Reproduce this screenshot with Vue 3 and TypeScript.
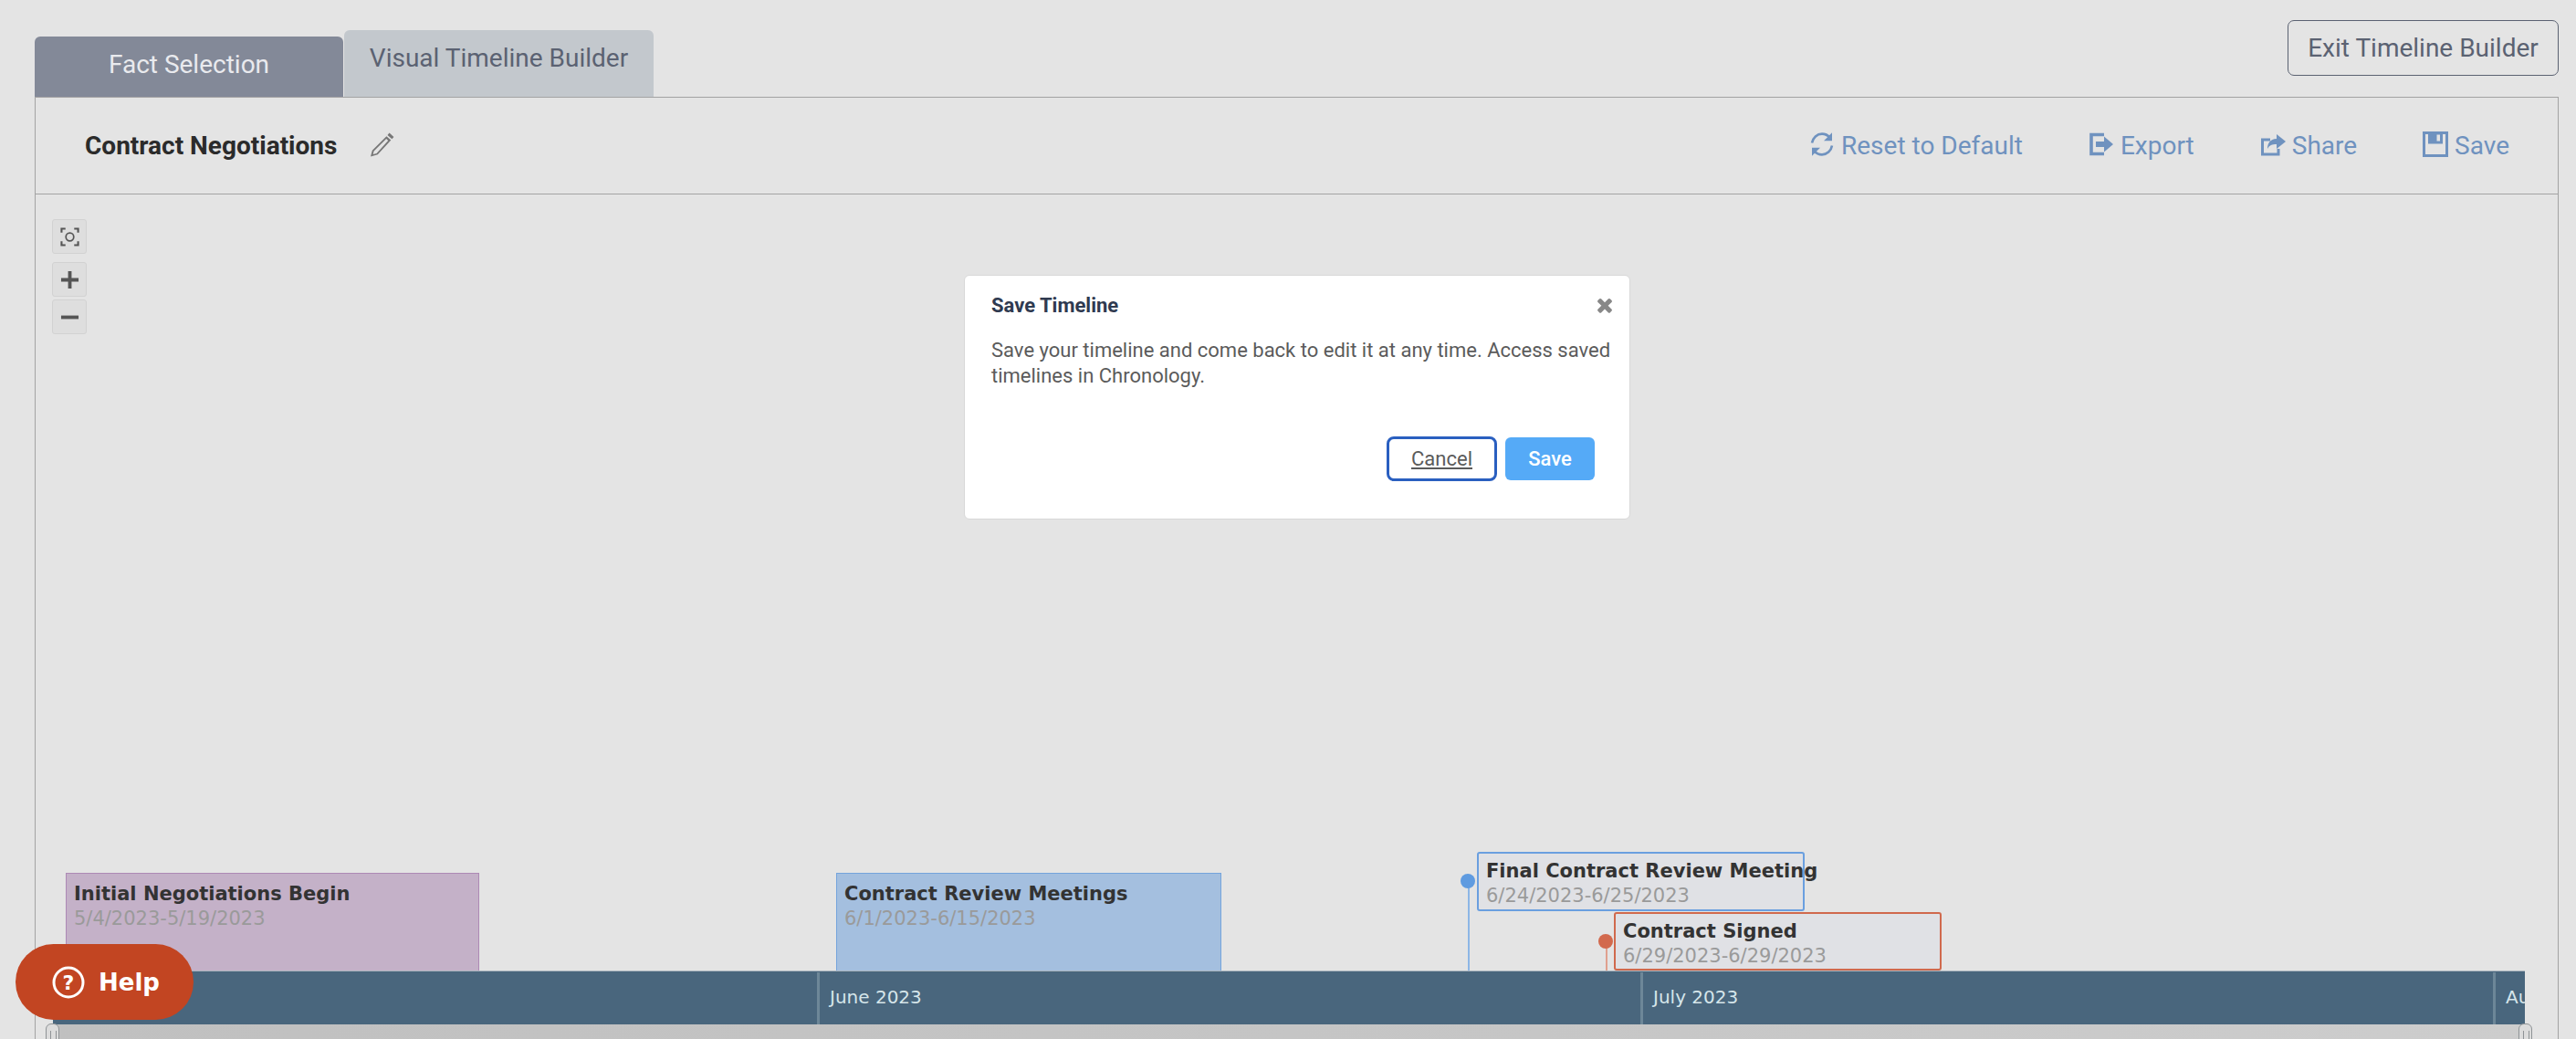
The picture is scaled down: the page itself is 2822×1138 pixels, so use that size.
<script setup lang="ts">
interface Span {
  title: string
  dates: string
  left: number
  width: number
  kind: string
}

const spans: Span[] = [
  { title: 'Initial Negotiations Begin', dates: '5/4/2023-5/19/2023', left: 71, width: 453, kind: 'purple' },
  { title: 'Contract Review Meetings', dates: '6/1/2023-6/15/2023', left: 915, width: 422, kind: 'blue' },
]

const months = [
  { label: 'June 2023', left: 837 },
  { label: 'July 2023', left: 1739 },
  { label: 'August 2023', left: 2673 },
]
</script>

<template>
  <div class="page">
    <div class="top-row">
      <div class="tabs">
        <div class="tab tab-fact">Fact Selection</div>
        <div class="tab tab-visual">Visual Timeline Builder</div>
      </div>
      <button class="exit-btn">Exit Timeline Builder</button>
    </div>

    <div class="panel">
      <div class="panel-head">
        <div class="name">
          <span>Contract Negotiations</span>
          <svg class="pencil" viewBox="0 0 28 28">
            <path d="M21.5 1.6l4.9 4.4-2 2.3-4.9-4.4zM18.4 5.2l4.9 4.4L8.8 25.2 1 27.4l1.8-6.7zM4.6 21.4l-1 3.6 4-1.1L20.2 9.9l-2-1.8z" fill="#777" fill-rule="evenodd" />
          </svg>
        </div>
        <div class="actions">
          <a class="action action-reset">
            <svg viewBox="0 0 28 28" class="ico">
              <path d="M3 12.5C4 6.8 8.6 2.6 14 2.6c3.4 0 6.4 1.5 8.4 4" fill="none" stroke="#6f92bf" stroke-width="2.6" />
              <path d="M25 1.2v9h-9z" fill="#6f92bf" />
              <path d="M25 15.5c-1 5.7-5.600 9.900-11 9.900-3.400 0-6.400-1.500-8.400-4" fill="none" stroke="#6f92bf" stroke-width="2.600" />
              <path d="M3 26.800v-9h9z" fill="#6f92bf" />
            </svg>
            Reset to Default
          </a>
          <a class="action action-export">
            <svg viewBox="0 0 28 28" class="ico">
              <path d="M17 3.500H3v21h14" fill="none" stroke="#6f92bf" stroke-width="3.600" />
              <path d="M8 11h9V5.500l10 8.500-10 8.500V17H8z" fill="#6f92bf" />
            </svg>
            Export
          </a>
          <a class="action action-share">
            <svg viewBox="0 0 28 28" class="ico">
              <path d="M11 9H2.500v16H20v-6" fill="none" stroke="#6f92bf" stroke-width="3" />
              <path d="M18 3l10 8-10 8v-5c-5 0-8 1-10 5 0-6 3-11 10-11z" fill="#6f92bf" />
            </svg>
            Share
          </a>
          <a class="action action-save">
            <svg viewBox="0 0 28 28" class="ico">
              <path d="M1.500 1.500h25v25h-25z" fill="none" stroke="#6f92bf" stroke-width="3" />
              <path d="M6 1.500h16v12H6z" fill="#6f92bf" />
              <path d="M15.500 3.500h3.500v7h-3.500z" fill="#e4e4e4" />
            </svg>
            Save
          </a>
        </div>
      </div>

      <div class="canvas">
        <div class="zoom-tools">
          <button class="zoom-btn">
            <svg viewBox="0 0 22 22" class="zoom-ico">
              <path d="M1.500 6V1.500H6M16 1.500h4.500V6M20.500 16v4.500H16M6 20.500H1.500V16" fill="none" stroke="#555" stroke-width="2.200" />
              <circle cx="11" cy="11" r="4.500" fill="none" stroke="#555" stroke-width="1.800" />
            </svg>
          </button>
          <div class="zoom-pair">
            <button class="zoom-btn">
              <svg viewBox="0 0 22 22" class="zoom-ico">
                <path d="M1 11h20M11 1v20" stroke="#555" stroke-width="4" />
              </svg>
            </button>
            <button class="zoom-btn">
              <svg viewBox="0 0 22 22" class="zoom-ico">
                <path d="M1 11h20" stroke="#555" stroke-width="4" />
              </svg>
            </button>
          </div>
        </div>

        <div v-for="s in spans" :key="s.title" class="span" :class="s.kind" :style="{ left: s.left - 38 + 'px', width: s.width + 'px' }">
          <div class="item-title">{{ s.title }}</div>
          <div class="item-dates">{{ s.dates }}</div>
        </div>

        <div class="stem stem-blue"></div>
        <div class="dot dot-blue"></div>
        <div class="point point-blue">
          <div class="item-title">Final Contract Review Meeting</div>
          <div class="item-dates">6/24/2023-6/25/2023</div>
        </div>

        <div class="stem stem-red"></div>
        <div class="dot dot-red"></div>
        <div class="point point-red">
          <div class="item-title">Contract Signed</div>
          <div class="item-dates">6/29/2023-6/29/2023</div>
        </div>

        <div class="axis">
          <div v-for="m in months" :key="m.label" class="month" :style="{ left: m.left + 'px' }">{{ m.label }}</div>
        </div>
        <div class="scroller">
          <div class="handle handle-left"></div>
          <div class="handle handle-right"></div>
        </div>
      </div>
    </div>

    <div class="modal">
      <div class="modal-title">Save Timeline</div>
      <svg class="modal-close" viewBox="0 0 1792 1792">
        <path d="M1490 1322q0 40-28 68l-136 136q-28 28-68 28t-68-28l-294-294-294 294q-28 28-68 28t-68-28l-136-136q-28-28-28-68t28-68l294-294-294-294q-28-28-28-68t28-68l136-136q28-28 68-28t68 28l294 294 294-294q28-28 68-28t68 28l136 136q28 28 28 68t-28 68l-294 294 294 294q28 28 28 68z" fill="#888" />
      </svg>
      <p class="modal-text">Save your timeline and come back to edit it at any time. Access saved timelines in Chronology.</p>
      <div class="modal-foot">
        <button class="btn-cancel">Cancel</button>
        <button class="btn-save">Save</button>
      </div>
    </div>

    <button class="help">
      <svg class="help-ico" viewBox="0 0 36 36">
        <circle cx="18" cy="18" r="16" fill="none" stroke="#fff" stroke-width="3" />
        <text x="18" y="26" text-anchor="middle" class="help-q">?</text>
      </svg>
      Help
    </button>
  </div>
</template>

<style>
html,
body {
  margin: 0;
  background: #e4e4e4;
}
</style>

<style scoped>
.page {
  position: relative;
  width: 2822px;
  height: 1138px;
  overflow: hidden;
  background: #e4e4e4;
  font-family: Roboto, sans-serif;
  display: flex;
  flex-direction: column;
}

.top-row {
  height: 106px;
  padding: 0 19px 0 38px;
  display: flex;
  justify-content: space-between;
  box-sizing: border-box;
  flex: none;
}

.tabs {
  display: flex;
  align-items: flex-end;
  gap: 1px;
}

.tab {
  font-size: 28px;
  display: flex;
  justify-content: center;
  border-radius: 6px 6px 0 0;
  box-sizing: border-box;
}

.tab-fact {
  width: 338px;
  height: 66px;
  padding-top: 14px;
  background: #838998;
  color: #e9eaee;
}

.tab-visual {
  width: 339px;
  height: 73px;
  padding-top: 14px;
  background: #c3c8cd;
  color: #5b6272;
}

.exit-btn {
  margin-top: 22px;
  width: 297px;
  height: 61px;
  padding: 0;
  background: transparent;
  border: 1.500px solid #5b6272;
  border-radius: 7px;
  font-family: Roboto, sans-serif;
  font-size: 28px;
  color: #5b6272;
}

.panel {
  margin: 0 19px 0 38px;
  flex: 1;
  display: flex;
  flex-direction: column;
  border: 1.500px solid #a3a3a3;
  border-bottom: 0;
  box-sizing: border-box;
  min-height: 0;
}

.panel-head {
  height: 105px;
  flex: none;
  padding: 0 53px 0 54px;
  border-bottom: 1.500px solid #a3a3a3;
  display: flex;
  align-items: center;
  justify-content: space-between;
  box-sizing: content-box;
}

.name {
  display: flex;
  align-items: center;
  gap: 36px;
  font-size: 28px;
  font-weight: 700;
  color: #2b2b2b;
}

.pencil {
  width: 28px;
  height: 28px;
  margin-top: -4px;
}

.actions {
  display: flex;
  gap: 72px;
}

.action {
  display: flex;
  align-items: center;
  gap: 7px;
  font-size: 28px;
  color: #6f92bf;
}

.ico {
  width: 28px;
  height: 28px;
  margin-top: -4px;
}

.canvas {
  position: relative;
  flex: 1;
  min-height: 0;
}

.zoom-tools {
  position: absolute;
  left: 18px;
  top: 27px;
  display: flex;
  flex-direction: column;
  gap: 9px;
}

.zoom-pair {
  display: flex;
  flex-direction: column;
  gap: 3px;
}

.zoom-btn {
  width: 38px;
  height: 38px;
  padding: 0;
  background: #dedede;
  border: 1px solid #d2d2d2;
  border-radius: 3px;
  display: flex;
  align-items: center;
  justify-content: center;
}

.zoom-ico {
  width: 21px;
  height: 21px;
}

.span,
.point {
  position: absolute;
  box-sizing: border-box;
  font-family: "DejaVu Sans", sans-serif;
}

.span {
  top: 743px;
  height: 107px;
  padding: 9px 8px;
  border: 1.500px solid;
  border-bottom: 0;
}

.purple {
  background: #c4b1c8;
  border-color: #ad89b5;
}

.blue {
  background: #a4bfdf;
  border-color: #74a4dc;
}

.item-title {
  font-size: 21px;
  font-weight: 700;
  line-height: 27px;
  color: #333;
  white-space: nowrap;
}

.item-dates {
  font-size: 21px;
  line-height: 26px;
  color: #9a9a9a;
  white-space: nowrap;
}

.point {
  width: 359px;
  height: 65px;
  padding: 6px 8px;
  background: #e0e1e5;
  border: 2px solid;
  border-radius: 3px;
}

.point-blue {
  left: 1579px;
  top: 720px;
  border-color: #6a9fdf;
}

.point-red {
  left: 1729px;
  top: 786px;
  height: 64px;
  border-color: #d0694d;
}

.stem,
.dot {
  position: absolute;
}

.stem {
  width: 1.500px;
}

.stem-blue {
  left: 1569px;
  top: 752px;
  height: 98px;
  background: #8db6e6;
}

.stem-red {
  left: 1720px;
  top: 818px;
  height: 32px;
  background: #e0a08e;
}

.dot {
  width: 16px;
  height: 16px;
  border-radius: 50%;
}

.dot-blue {
  left: 1561px;
  top: 744px;
  background: #5f9be0;
}

.dot-red {
  left: 1712px;
  top: 810px;
  background: #d2694d;
}

.axis {
  position: absolute;
  left: 19px;
  top: 850px;
  width: 2708px;
  height: 59px;
  background: #49667d;
  overflow: hidden;
  border-top: 1px solid #a9b4bd;
  box-sizing: border-box;
}

.month {
  position: absolute;
  top: 1px;
  height: 57px;
  padding-left: 11px;
  border-left: 3px solid #6d8798;
  line-height: 55px;
  font-family: "DejaVu Sans", sans-serif;
  font-size: 20px;
  color: #d5e5ea;
  white-space: nowrap;
}

.scroller {
  position: absolute;
  left: 19px;
  top: 909px;
  width: 2708px;
  height: 30px;
  background: linear-gradient(90deg, #c0c0c0, #c6c6c6 60%, #cdcdcd);
}

.handle {
  position: absolute;
  top: -1px;
  width: 15px;
  height: 30px;
  box-sizing: border-box;
  border: 1.500px solid #8f9396;
  border-radius: 6px 6px 0 0;
  background: #dcdcdc;
}

.handle::after {
  content: "";
  position: absolute;
  left: 3.500px;
  top: 7px;
  width: 5px;
  height: 20px;
  border: solid #8f9396;
  border-width: 0 1px;
}

.handle-left {
  left: -8px;
}

.handle-right {
  right: -8px;
}

.modal {
  position: absolute;
  left: 1056px;
  top: 301px;
  width: 730px;
  height: 268px;
  box-sizing: border-box;
  padding: 19px 29px 0;
  background: #fff;
  border: 1px solid #d8d8d8;
  border-radius: 6px;
  display: flex;
  flex-direction: column;
}

.modal-title {
  font-size: 22px;
  font-weight: 700;
  line-height: 28px;
  color: #2f3a50;
}

.modal-close {
  position: absolute;
  left: 689px;
  top: 20px;
  width: 24px;
  height: 24px;
}

.modal-text {
  margin: 21px 0 0;
  width: 680px;
  font-size: 22px;
  line-height: 28px;
  color: #5b5b5b;
}

.modal-foot {
  margin-top: 52px;
  align-self: flex-end;
  display: flex;
  align-items: center;
  gap: 9px;
  margin-right: 9px;
}

.btn-cancel {
  width: 121px;
  height: 49px;
  padding: 0;
  background: #fff;
  border: 3px solid #2a5fc0;
  border-radius: 8px;
  font-family: Roboto, sans-serif;
  font-size: 22px;
  color: #5b5b5b;
  text-decoration: underline;
}

.btn-save {
  width: 98px;
  height: 47px;
  padding: 0;
  background: #55aaf7;
  border: 0;
  border-radius: 6px;
  font-family: Roboto, sans-serif;
  font-size: 22px;
  font-weight: 500;
  color: #fff;
}

.help {
  position: absolute;
  left: 17px;
  top: 1034px;
  width: 195px;
  height: 83px;
  padding: 0 0 0 40px;
  background: #c24522;
  border: 0;
  border-radius: 42px;
  display: flex;
  align-items: center;
  gap: 15px;
  font-family: "DejaVu Sans", sans-serif;
  font-size: 26px;
  font-weight: 700;
  color: #fff;
}

.help-ico {
  width: 36px;
  height: 36px;
  flex: none;
}

.help-q {
  font-family: "DejaVu Sans", sans-serif;
  font-size: 22px;
  font-weight: 700;
  fill: #fff;
}
</style>
